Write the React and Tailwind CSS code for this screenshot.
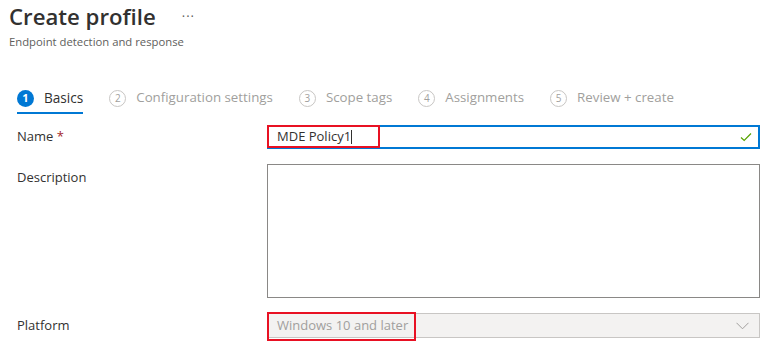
import React from 'react';

const steps = [
    { n: 1, label: 'Basics', active: true },
    { n: 2, label: 'Configuration settings' },
    { n: 3, label: 'Scope tags' },
    { n: 4, label: 'Assignments' },
    { n: 5, label: 'Review + create' },
];

function Step({ n, label, active }) {
    return (
        <div className="relative flex items-center gap-[10px] h-[30px]">
            {active ? (
                <div className="w-[17px] h-[17px] rounded-full bg-[#0078d4] text-white text-[11px] font-bold flex items-center justify-center">
                    {n}
                </div>
            ) : (
                <div className="w-[17px] h-[17px] rounded-full border border-[#c8c6c4] text-[#a19f9d] text-[10px] flex items-center justify-center">
                    {n}
                </div>
            )}
            <span className={active ? 'text-[13.6px] text-[#323130]' : 'text-[13.3px] text-[#a19f9d]'}>{label}</span>
            {active && <div className="absolute left-0 right-0 bottom-[-1px] h-[2px] bg-[#0078d4]" />}
        </div>
    );
}

export default function App() {
    return (
        <div
            className="w-[762px] h-[344px] bg-white overflow-hidden"
            style={{ fontFamily: '"Segoe UI", "Open Sans", sans-serif' }}
        >
            {/* Header */}
            <div className="pl-[9px] pt-[1px]">
                <div className="flex items-center">
                    <h1 className="text-[22.2px] leading-[32px] font-semibold text-[#323130]">Create profile</h1>
                    <span className="ml-[26px] text-[13px] text-[#605e5c] tracking-[1px]">···</span>
                </div>
                <p className="text-[11.3px] leading-[16px] text-[#605e5c] mt-[1px]">Endpoint detection and response</p>
            </div>

            {/* Wizard steps */}
            <div className="flex items-center gap-[26px] pl-[17px] mt-[33px]">
                {steps.map((s) => (
                    <Step key={s.n} {...s} />
                ))}
            </div>

            {/* Form */}
            <div className="pl-[17px] pr-[2px] mt-[12px] flex flex-col gap-[15px]">
                <div className="flex items-center">
                    <div className="w-[250px] text-[13px] text-[#323130]">
                        Name <span className="text-[#a4262c]">*</span>
                    </div>
                    <div className="relative flex-1 h-[24px] border-2 border-[#0078d4] flex items-center pl-[8px] pr-[6px]">
                        <span className="text-[13px] text-[#323130]">MDE Policy1</span>
                        <span className="w-px h-[14px] bg-[#323130]" />
                        <svg className="ml-auto" width="12" height="10" viewBox="0 0 12 10" fill="none">
                            <path d="M1 5.5 L4.2 8.5 L11 1.5" stroke="#57a300" strokeWidth="1.2" />
                        </svg>
                        <div className="absolute left-[-2px] top-[-2px] w-[113px] h-[23px] border-2 border-[#e81123]" />
                    </div>
                </div>

                <div className="flex items-start">
                    <div className="w-[250px] text-[13px] text-[#323130] pt-[4px]">Description</div>
                    <div className="flex-1 h-[134px] border border-[#8a8886] bg-white" />
                </div>

                <div className="flex items-center">
                    <div className="w-[250px] text-[13px] text-[#323130]">Platform</div>
                    <div className="relative flex-1 h-[25px] border border-[#c8c6c4] bg-[#f3f2f1] flex items-center pl-[9px] pr-[10px]">
                        <span className="text-[13px] text-[#a19f9d]">Windows 10 and later</span>
                        <svg className="ml-auto" width="13" height="8" viewBox="0 0 13 8" fill="none">
                            <path d="M0.5 0.8 L6.5 6.8 L12.5 0.8" stroke="#a19f9d" strokeWidth="1" />
                        </svg>
                        <div className="absolute left-[-1px] top-[-2px] w-[149px] h-[29px] border-2 border-[#e81123]" />
                    </div>
                </div>
            </div>
        </div>
    );
}
